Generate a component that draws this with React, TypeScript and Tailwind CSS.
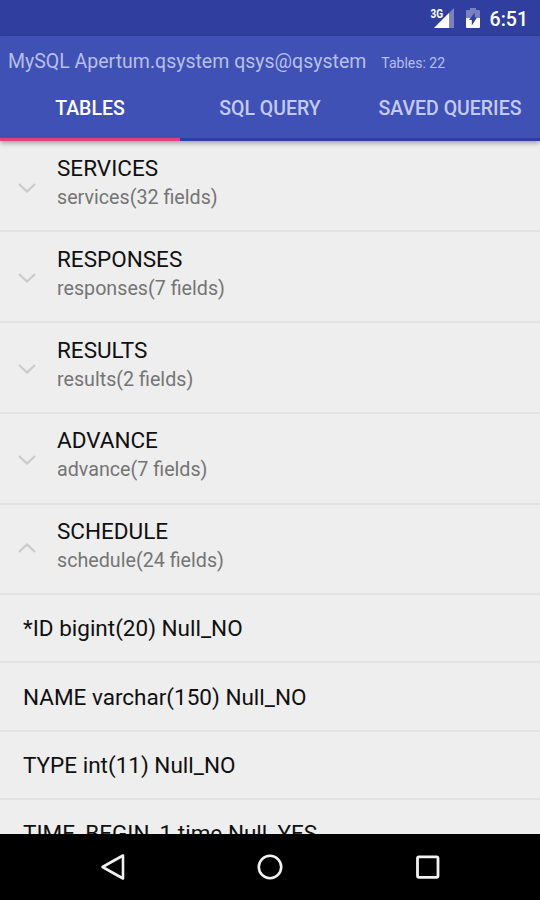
import type { ReactNode } from 'react';

const tables = [
    { name: 'SERVICES', info: 'services(32 fields)', open: false },
    { name: 'RESPONSES', info: 'responses(7 fields)', open: false },
    { name: 'RESULTS', info: 'results(2 fields)', open: false },
    { name: 'ADVANCE', info: 'advance(7 fields)', open: false },
    { name: 'SCHEDULE', info: 'schedule(24 fields)', open: true },
];

const fields = [
    '*ID bigint(20) Null_NO',
    'NAME varchar(150) Null_NO',
    'TYPE int(11) Null_NO',
    'TIME_BEGIN_1 time Null_YES',
];

const StatusBar = () => (
    <div className="flex h-9 shrink-0 items-center justify-end bg-[#303f9f] pr-[12px] text-white">
        <svg className="mr-[11px] h-[24px] w-[26px]" viewBox="0 0 26 24">
            <path d="M25 2V22H5Z" fill="#fff" fillOpacity=".35" />
            <path d="M20 7V22H5Z" fill="#fff" />
            <text x="1.5" y="11.5" fill="#fff" stroke="#303f9f" strokeWidth="2" paintOrder="stroke" fontSize="12.5" fontWeight="700" textLength="12.5" lengthAdjust="spacingAndGlyphs">3G</text>
        </svg>
        <svg className="mr-[10px] h-[20px] w-[14px]" viewBox="0 0 14 20">
            <path d="M4 0H10V2H13Q14 2 14 3V10H0V3Q0 2 1 2H4Z" fill="#fff" fillOpacity=".35" />
            <path d="M0 10H14V19Q14 20 13 20H1Q0 20 0 19Z" fill="#fff" />
            <path d="M8.8 4.5V9.5H11L5.8 17.5V12H3Z" fill="#303f9f" />
        </svg>
        <span className="pt-[3px] text-[19.5px] leading-none font-medium">6:51</span>
    </div>
);

const Tab = ({ active, children }: { active?: boolean; children: ReactNode }) => (
    <div className={`flex w-[180px] items-start justify-center border-b-[3px] pt-[12px] text-[19.5px] leading-[24px] font-medium whitespace-nowrap ${active ? 'border-[#e73b82] text-white' : 'border-[#2e3fa3] text-[#c3caf0]'}`}>
        {children}
    </div>
);

const Chevron = ({ open }: { open: boolean }) => (
    <svg className={`h-[10px] w-[18px] ${open ? 'rotate-180' : ''}`} viewBox="0 0 18 10" fill="none" stroke="#cacaca" strokeWidth="2.2">
        <path d="M1 1L9 8.5L17 1" />
    </svg>
);

export default function App() {
    return (
        <div className="flex h-[900px] w-[540px] flex-col overflow-hidden bg-[#eeeeee] font-[Roboto,sans-serif]">
            <StatusBar />

            <header className="z-10 flex h-[105px] shrink-0 flex-col bg-[#3f51b5] shadow-[0_2px_5px_rgba(0,0,0,0.35)]">
                <div className="flex h-[49px] items-baseline pt-[12px] pl-[8px] text-[#b7bfe8]">
                    <span className="text-[19.5px] leading-[27px]">MySQL Apertum.qsystem qsys@qsystem</span>
                    <span className="ml-[15px] text-[14px]">Tables: 22</span>
                </div>
                <nav className="flex grow">
                    <Tab active>TABLES</Tab>
                    <Tab>SQL QUERY</Tab>
                    <Tab>SAVED QUERIES</Tab>
                </nav>
            </header>

            <main className="flex min-h-0 grow flex-col overflow-hidden pt-[0.5px]">
                {tables.map((table) => (
                    <div key={table.name} className="flex h-[90.75px] shrink-0 border-b-2 border-[#e2e2e2]">
                        <div className={`w-[57px] pl-[18px] ${table.open ? 'pt-[38px]' : 'pt-[41px]'}`}>
                            <Chevron open={table.open} />
                        </div>
                        <div className="pt-[12.5px]">
                            <div className="text-[22.5px] leading-[29px] text-[#101010]">{table.name}</div>
                            <div className="text-[19.7px] leading-[29.5px] text-[#757575]">{table.info}</div>
                        </div>
                    </div>
                ))}
                {fields.map((field) => (
                    <div key={field} className="flex h-[68.2px] shrink-0 items-center border-b-2 border-[#e2e2e2] pt-[2px] pl-[23px] text-[22.5px] text-[#101010]">
                        {field}
                    </div>
                ))}
            </main>

            <footer className="flex h-[66px] shrink-0 items-center bg-black">
                <svg className="ml-[99px] h-[30px] w-[28px]" viewBox="0 0 28 30" fill="none" stroke="#f2f2f2" strokeWidth="2.6" strokeLinejoin="round">
                    <path d="M24 3.5V26.5L3.5 15Z" />
                </svg>
                <svg className="ml-[128px] h-[30px] w-[30px]" viewBox="0 0 30 30" fill="none" stroke="#f2f2f2" strokeWidth="2.6">
                    <circle cx="15" cy="15" r="11.2" />
                </svg>
                <svg className="ml-[128px] h-[30px] w-[30px]" viewBox="0 0 30 30" fill="none" stroke="#f2f2f2" strokeWidth="2.8">
                    <rect x="4.5" y="4.8" width="20.5" height="20.5" rx="1.5" />
                </svg>
            </footer>
        </div>
    );
}
